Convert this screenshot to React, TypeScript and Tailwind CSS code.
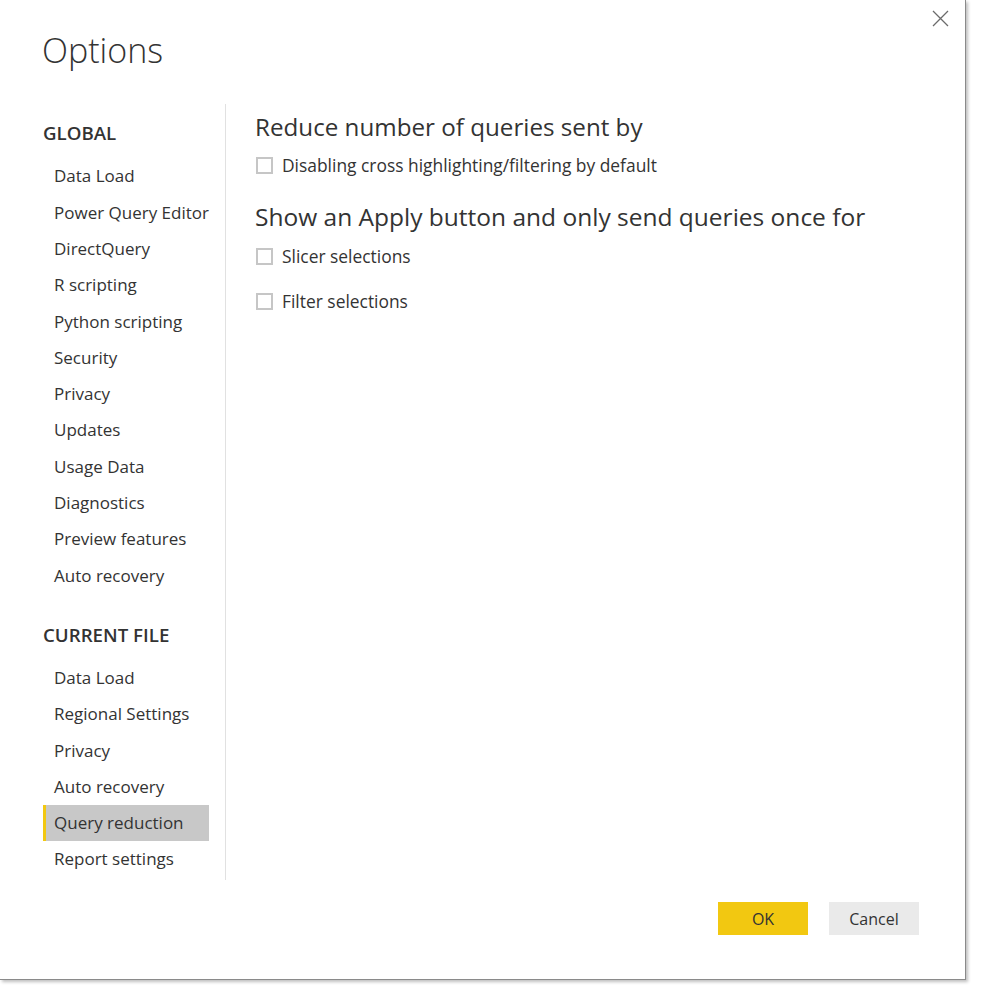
import React from "react";

const globalItems = [
  "Data Load",
  "Power Query Editor",
  "DirectQuery",
  "R scripting",
  "Python scripting",
  "Security",
  "Privacy",
  "Updates",
  "Usage Data",
  "Diagnostics",
  "Preview features",
  "Auto recovery",
];

const fileItems = [
  "Data Load",
  "Regional Settings",
  "Privacy",
  "Auto recovery",
  "Query reduction",
  "Report settings",
];

function NavItem({ label, active }: { label: string; active?: boolean }) {
  return (
    <div
      className={
        active
          ? "h-[36.3px] flex items-center pl-[8px] border-l-[3px] border-[#f2c811] bg-[#c8c8c8] text-[17px]"
          : "h-[36.3px] flex items-center pl-[11px] text-[17px]"
      }
    >
      {label}
    </div>
  );
}

function Check({ label }: { label: string }) {
  return (
    <div className="flex items-center gap-[9px] text-[17.4px]">
      <span className="ml-[1px] w-[17px] h-[17px] border-2 border-[#c6c6c6] bg-white" />
      <span>{label}</span>
    </div>
  );
}

export default function App() {
  return (
    <div className="w-[986px] h-[999px] bg-white text-[#333333] font-['Open_Sans',sans-serif]">
      <div className="relative w-[966px] h-[980px] bg-white border-r border-b border-[#8a8a8a] shadow-[2px_2px_3px_rgba(0,0,0,0.25)] flex flex-col">
        {/* close */}
        <button className="absolute left-[932px] top-[10px] w-[17px] h-[17px]">
          <svg width="17" height="17" viewBox="0 0 17 17">
            <path d="M1 1 L16 16 M16 1 L1 16" stroke="#6b6b6b" strokeWidth="1.3" fill="none" />
          </svg>
        </button>

        <div className="h-[104px] pl-[42px] pt-[27px]">
          <h1 className="text-[34px] font-light leading-[46px] text-[#333]">Options</h1>
        </div>

        <div className="flex flex-1">
          <div className="w-[226px] shrink-0 pl-[43px] border-r border-[#e1e1e1] h-[776px] pt-[17px]">
            <div className="w-[166px]">
              <div className="text-[18.7px] font-semibold leading-[24px] mb-[13px]">GLOBAL</div>
              {globalItems.map((l) => (
                <NavItem key={l} label={l} />
              ))}
              <div className="text-[18.7px] font-semibold leading-[24px] mt-[29px] mb-[13px]">CURRENT FILE</div>
              {fileItems.map((l) => (
                <NavItem key={l} label={l} active={l === "Query reduction"} />
              ))}
            </div>
          </div>

          <div className="pl-[29px] pt-[7px]">
            <h2 className="text-[24.2px] leading-[32px]">Reduce number of queries sent by</h2>
            <div className="mt-[9px]">
              <Check label="Disabling cross highlighting/filtering by default" />
            </div>
            <h2 className="text-[24.5px] leading-[32px] mt-[23px]">Show an Apply button and only send queries once for</h2>
            <div className="mt-[10px] flex flex-col gap-[19px]">
              <Check label="Slicer selections" />
              <Check label="Filter selections" />
            </div>
          </div>
        </div>

        <div className="flex justify-end gap-[21px] pr-[46px] pb-[44px]">
          <button className="w-[90px] h-[33px] bg-[#f2c811] text-[16px] text-[#333]">OK</button>
          <button className="w-[90px] h-[33px] bg-[#eaeaea] text-[16px] text-[#333]">Cancel</button>
        </div>
      </div>
    </div>
  );
}
